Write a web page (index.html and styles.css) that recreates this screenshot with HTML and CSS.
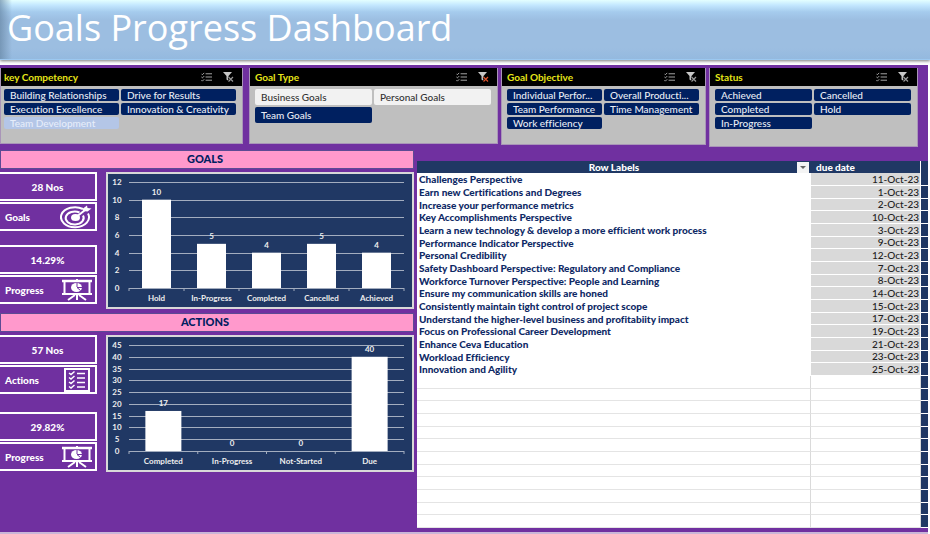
FILE: index.html
```html
<!DOCTYPE html>
<html lang="en">
<head>
<meta charset="utf-8">
<title>Goals Progress Dashboard</title>
<link rel="stylesheet" href="styles.css">
</head>
<body>
<svg class="defs" aria-hidden="true">
  <symbol id="multi" viewBox="0 0 12 10"><path d="M5 1.500h7M5 5h7M5 8.500h7M.5 1.500l1 1 2-2M.5 5l1 1 2-2M.5 8.500l1 1 2-2" fill="none" stroke="#b4b4b4"/></symbol>
  <symbol id="funnel" viewBox="0 0 11 10"><path d="M0 0h9L5.500 4v5L3.500 7.500V4z" fill="#c8c8c8"/><path d="M5.500 5l4.500 4.500M10 5L5.500 9.500" fill="none" stroke="#000" stroke-width="2.500"/><path d="M5.500 5l4.500 4.500M10 5L5.500 9.500" fill="none" stroke="currentColor" stroke-width="1.200"/></symbol>
  <symbol id="target" viewBox="0 0 32 24"><g fill="none" stroke="#fff" stroke-width="2"><path d="M23 4A14 10 0 1 0 28 8.500"/><path d="M19.500 7.500A9 6.500 0 1 0 23 10.500"/></g><ellipse cx="15.500" cy="12.500" rx="4.500" ry="3.500" fill="#fff"/><path d="M15 13L27 3.500" stroke="#fff" stroke-width="2"/><path d="M23 3.500L27 .5l.5 2.500 4 .5-4 3-4.500-.5z" fill="#fff"/></symbol>
  <symbol id="board" viewBox="0 0 30 22"><g fill="none" stroke="#fff"><path d="M0 2h30" stroke-width="2.500"/><path d="M2.500 2v13M27.500 2v13M0 15h30" stroke-width="2"/><path d="M15 0v2M15 15v6M13 16l-7 5M17 16l7 5" stroke-width="2"/></g><ellipse cx="14.500" cy="8.500" rx="5.500" ry="4.500" fill="#fff"/><path d="M15 8V4M15 8.500h5M15 8.500l3.500 3" fill="none" stroke="#7030a0"/></symbol>
  <symbol id="list" viewBox="0 0 26 24"><path d="M1 1h24v22H1z" fill="none" stroke="#fff" stroke-width="2"/><path d="M13 5.500h8M13 10h8M13 14.500h8M13 19h8M5 5l2 1.500L10.500 3.500M5 9.500l2 1.500 3.500-3M5 14l2 1.500 3.500-3M5 18.500l2 1.500 3.500-3" fill="none" stroke="#fff" stroke-width="1.500"/></symbol>
</svg>
<header class="banner"><h1>Goals Progress Dashboard</h1></header>
<main class="dashboard">
  <div class="slicers" id="slicers"></div>
  <div class="content">
    <div class="panels">
      <section class="panel">
        <h2>GOALS</h2>
        <div class="panel-body">
          <div class="stats">
            <div class="stat"><div class="stat-value">28 Nos</div><div class="stat-name">Goals<svg class="icon-target"><use href="#target"/></svg></div></div>
            <div class="stat"><div class="stat-value">14.29%</div><div class="stat-name">Progress<svg class="icon-board"><use href="#board"/></svg></div></div>
          </div>
          <div class="chart" id="goals-chart"></div>
        </div>
      </section>
      <section class="panel">
        <h2>ACTIONS</h2>
        <div class="panel-body">
          <div class="stats stats-spread">
            <div class="stat"><div class="stat-value">57 Nos</div><div class="stat-name">Actions<svg class="icon-list"><use href="#list"/></svg></div></div>
            <div class="stat"><div class="stat-value">29.82%</div><div class="stat-name">Progress<svg class="icon-board"><use href="#board"/></svg></div></div>
          </div>
          <div class="chart" id="actions-chart"></div>
        </div>
      </section>
    </div>
    <table class="goals">
      <colgroup><col><col class="col-date"><col class="col-end"></colgroup>
      <thead><tr><th><div class="th-label">Row Labels<button type="button" class="drop" aria-label="Filter rows"></button></div></th><th class="date-head">due date</th><th></th></tr></thead>
      <tbody id="rows"></tbody>
    </table>
  </div>
</main>
<script src="app.js"></script>
</body>
</html>
```
FILE: styles.css
```css
* { box-sizing: border-box; }
body { margin: 0; background: #fff; font-family: Lato, "Open Sans", sans-serif; font-size: 10px; font-variant-ligatures: none; }
h1, h2 { margin: 0; }
.defs { position: absolute; width: 0; height: 0; }

.banner {
  height: 60px;
  padding: 0 7px;
  border-bottom: 1px solid #9cc8f0;
  box-shadow: 0 1px 3px #777;
  background:
    linear-gradient(90deg, #6484a2aa, #7fa3c600 12px),
    linear-gradient(#e4ffff, #c4e8ff 5px, #a5cbed 12px, #9cbee1 20px, #9cbee1 48px, #94b9df);
}
h1 { color: #fff; font: 36px/56px "Open Sans", sans-serif; white-space: nowrap; }

.dashboard {
  margin: 5px 2px 0 0;
  padding: 3px 0 4px;
  background: #7030a0;
  border-bottom: 2px solid #c9b6d8;
}
.slicers {
  display: grid;
  grid-template-columns: 246fr 249fr 205fr 209fr;
  gap: 3px;
  align-items: start;
  height: 82px;
  padding-right: 10px;
}
.slicer { background: #bfbfbf; border: 1px solid #a995b8; border-top: 0; height: 77px; }
.slicer-competency { margin-right: 3px; }
.slicer-competency, .slicer-type { height: 76px; }
.slicer-status { height: 79px; }
.slicer-head { display: flex; align-items: center; height: 18px; padding: 0 8px 0 5px; background: #000; color: #e6e619; font-weight: 700; }
.slicer-competency .slicer-head { padding-left: 3px; }
.slicer-head span { flex: 1; }
.tool { padding: 0; border: 0; background: none; height: 10px; margin-left: 11px; color: #999; }
.tool svg { display: block; width: 11px; height: 10px; }
.tool.active { color: #e0532c; }
.options { display: grid; grid-template-columns: 1fr 1fr; gap: 2px; padding: 3px 6px 0 5px; }
.slicer-competency .options { padding-left: 3px; }
.option { height: 12px; padding: 0 6px; border: 0; border-radius: 2px; background: #002060; color: #e9edf5; font: 500 10px/12px Lato, sans-serif; font-variant-ligatures: none; text-align: left; white-space: nowrap; overflow: hidden; }
.slicer-type .option { height: 16px; line-height: 16px; }
.option.off { background: #f2f2f2; color: #333; }
.option.faded { background: #b4c6e7; color: #e6edfa; }

.content { display: grid; grid-template-columns: 414fr 511fr; gap: 3px; align-items: start; }
.panel { margin-bottom: 4px; }
h2 { height: 19px; padding-right: 4px; border: 1px solid #5c4a94; background: #ff99cc; color: #002060; font: 900 11px/15px Lato, sans-serif; text-align: center; }
.panel-body { display: grid; grid-template-columns: 97fr 308fr; gap: 9px; padding-top: 3px; }
.stats { display: flex; flex-direction: column; gap: 14px; color: #fff; font-weight: 900; }
.stats-spread { gap: 18px; }
.stat { display: grid; grid-template-rows: 29px 29px; gap: 1px; }
.stat-value, .stat-name { display: flex; align-items: center; border: 2px solid #fff; border-left: 0; }
.stat-value { justify-content: center; }
.stat-name { justify-content: space-between; padding: 0 3px 0 5px; }
.icon-target { width: 32px; height: 24px; }
.icon-board { width: 30px; height: 22px; }
.icon-list { width: 26px; height: 24px; margin-right: 2px; }
.chart { border: 2px solid #d9d9d9; background: #203864; height: 137px; }
.chart svg { display: block; width: 100%; height: 100%; }
.chart text { fill: #eee; font: 700 8px Lato, sans-serif; text-anchor: middle; }

.goals { width: 100%; margin-top: 11px; border-collapse: separate; border-spacing: 0; table-layout: fixed; background: #fff; color: #0f2a66; font-weight: 900; line-height: 11px; }
.col-date { width: 110px; }
.col-end { width: 7px; }
.goals td, .goals th { padding: 0 2px; height: 12px; white-space: nowrap; }
.goals th { background: #203864; color: #fff; font-weight: 900; }
.th-label { display: flex; justify-content: center; position: relative; }
.drop { position: absolute; right: 0; top: 0; width: 12px; height: 11px; padding: 0; border: 0; background: #f4f4f4; }
.drop::after { content: ""; display: block; margin: 1px auto 0; width: 0; border: 3px solid transparent; border-top: 3px solid #666; border-bottom: 0; }
.goals .date-head { padding-left: 5px; text-align: left; border-right: 1px solid #fff; }
.goals tbody tr:not(:nth-child(3n)) td { height: 13px; }
.goals .date { padding-right: 1px; background: #d9d9d9; border-bottom: 1px solid #fff; border-right: 1px solid #fff; color: #222; font-weight: 500; text-align: right; }
.goals .end { background: #203864; border-bottom: 1px solid #fff; }
.goals .blank { border-bottom: 1px solid #e4e4e4; border-right: 1px solid #dadada; }
```
FILE: app.js
```js
const slicers = [
  ["competency", "key Competency", ["Building Relationships", "Drive for Results", "Execution Excellence", "Innovation & Creativity", "Team Development|faded"]],
  ["type", "Goal Type", ["Business Goals|off", "Personal Goals|off", "Team Goals"]],
  ["objective", "Goal Objective", ["Individual Perfor...", "Overall Producti...", "Team Performance", "Time Management", "Work efficiency"]],
  ["status", "Status", ["Achieved", "Cancelled", "Completed", "Hold", "In-Progress"]]
];
document.getElementById("slicers").innerHTML = slicers.map(([id, title, items]) => `
  <section class="slicer slicer-${id}">
    <div class="slicer-head"><span>${title}</span>
      <button type="button" class="tool" aria-label="Multi-select"><svg><use href="#multi"/></svg></button>
      <button type="button" class="tool ${id === "type" ? "active" : ""}" aria-label="Clear filter"><svg><use href="#funnel"/></svg></button>
    </div>
    <div class="options">${items.map(i => { const [t, c = ""] = i.split("|"); return `<button type="button" class="option ${c}">${t.replace("&", "&amp;")}</button>`; }).join("")}</div>
  </section>`).join("");

function chart(id, data, max, step, barWidth) {
  const left = 21, right = 296, top = 8, base = 114, slot = (right - left) / data.length;
  const y = v => base - v / max * (base - top);
  let s = "";
  for (let v = 0; v <= max; v += step) {
    s += `<path d="M${left} ${Math.round(y(v)) + .5}H${right}" stroke="#a3adbf"/><text x="9" y="${y(v) + 3}">${v}</text>`;
  }
  for (let i = 0; i <= data.length; i++) s += `<path d="M${left + i * slot} ${base}v3" stroke="#a3adbf"/>`;
  data.forEach(([name, v], i) => {
    const x = left + (i + .5) * slot;
    s += `<rect x="${x - barWidth / 2}" y="${y(v)}" width="${barWidth}" height="${base - y(v)}" fill="#fff"/><text x="${x}" y="${y(v) - 5}">${v}</text><text x="${x}" y="127">${name}</text>`;
  });
  document.getElementById(id).innerHTML = `<svg viewBox="0 0 304 133">${s}</svg>`;
}
chart("goals-chart", [["Hold", 10], ["In-Progress", 5], ["Completed", 4], ["Cancelled", 5], ["Achieved", 4]], 12, 2, 29);
chart("actions-chart", [["Completed", 17], ["In-Progress", 0], ["Not-Started", 0], ["Due", 40]], 45, 5, 36);

const goals = [["Challenges Perspective", 11], ["Earn new Certifications and Degrees", 1], ["Increase your performance metrics", 2], ["Key Accomplishments Perspective", 10], ["Learn a new technology & develop a more efficient work process", 3], ["Performance Indicator Perspective", 9], ["Personal Credibility", 12], ["Safety Dashboard Perspective: Regulatory and Compliance", 7], ["Workforce Turnover Perspective: People and Learning", 8], ["Ensure my communication skills are honed", 14], ["Consistently maintain tight control of project scope", 15], ["Understand the higher-level business and profitabiity impact", 17], ["Focus on Professional Career Development", 19], ["Enhance Ceva Education", 21], ["Workload Efficiency", 23], ["Innovation and Agility", 25]];
let rows = goals.map(([n, d]) => `<tr><td>${n.replace("&", "&amp;")}</td><td class="date">${d}-Oct-23</td><td class="end"></td></tr>`).join("");
for (let i = 0; i < 12; i++) rows += `<tr><td class="blank"></td><td class="blank"></td><td class="end"></td></tr>`;
document.getElementById("rows").innerHTML = rows;
```
